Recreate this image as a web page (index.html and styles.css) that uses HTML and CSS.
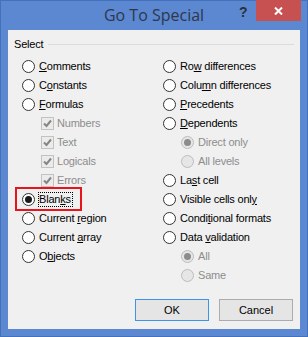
FILE: index.html
```html
<!DOCTYPE html>
<html>
<head>
<meta charset="utf-8">
<link rel="stylesheet" href="styles.css">
</head>
<body>
<div class="window">
  <div class="titlebar">
    <span class="title">Go To Special</span>
    <span class="help">?</span>
    <span class="close"><svg width="9" height="8" viewBox="0 0 9 8"><path d="M1 0.5 L8 7.5 M8 0.5 L1 7.5" stroke="#fff" stroke-width="2" fill="none"/></svg></span>
  </div>
  <div class="client">
    <div class="group-head"><span>Select</span><span class="rule"></span></div>
    <div class="cols">
      <div class="col">
        <div class="opt"><span class="radio"></span><span class="lbl"><u>C</u>omments</span></div>
        <div class="opt"><span class="radio"></span><span class="lbl">C<u>o</u>nstants</span></div>
        <div class="opt"><span class="radio"></span><span class="lbl"><u>F</u>ormulas</span></div>
        <div class="opt sub-l dis"><span class="check"><svg width="11" height="11" viewBox="0 0 11 11"><path d="M2 5.5 L4.5 8 L9 2.5" stroke="#858585" stroke-width="2" fill="none"/></svg></span><span class="lbl">Numbers</span></div>
        <div class="opt sub-l dis"><span class="check"><svg width="11" height="11" viewBox="0 0 11 11"><path d="M2 5.5 L4.5 8 L9 2.5" stroke="#858585" stroke-width="2" fill="none"/></svg></span><span class="lbl">Text</span></div>
        <div class="opt sub-l dis"><span class="check"><svg width="11" height="11" viewBox="0 0 11 11"><path d="M2 5.5 L4.5 8 L9 2.5" stroke="#858585" stroke-width="2" fill="none"/></svg></span><span class="lbl">Logicals</span></div>
        <div class="opt sub-l dis"><span class="check"><svg width="11" height="11" viewBox="0 0 11 11"><path d="M2 5.5 L4.5 8 L9 2.5" stroke="#858585" stroke-width="2" fill="none"/></svg></span><span class="lbl">Errors</span></div>
        <div class="opt marked"><span class="radio on"></span><span class="lbl focus">Blan<u>k</u>s</span></div>
        <div class="opt"><span class="radio"></span><span class="lbl">Current <u>r</u>egion</span></div>
        <div class="opt"><span class="radio"></span><span class="lbl">Current <u>a</u>rray</span></div>
        <div class="opt"><span class="radio"></span><span class="lbl">O<u>b</u>jects</span></div>
      </div>
      <div class="col">
        <div class="opt"><span class="radio"></span><span class="lbl">Ro<u>w</u> differences</span></div>
        <div class="opt"><span class="radio"></span><span class="lbl">Colu<u>m</u>n differences</span></div>
        <div class="opt"><span class="radio"></span><span class="lbl"><u>P</u>recedents</span></div>
        <div class="opt"><span class="radio"></span><span class="lbl"><u>D</u>ependents</span></div>
        <div class="opt sub-r dis"><span class="radio on"></span><span class="lbl">Direct only</span></div>
        <div class="opt sub-r dis"><span class="radio"></span><span class="lbl">All levels</span></div>
        <div class="opt"><span class="radio"></span><span class="lbl">La<u>s</u>t cell</span></div>
        <div class="opt"><span class="radio"></span><span class="lbl">Visible cells onl<u>y</u></span></div>
        <div class="opt"><span class="radio"></span><span class="lbl">Condi<u>t</u>ional formats</span></div>
        <div class="opt"><span class="radio"></span><span class="lbl">Data <u>v</u>alidation</span></div>
        <div class="opt sub-r dis"><span class="radio on"></span><span class="lbl">All</span></div>
        <div class="opt sub-r dis"><span class="radio"></span><span class="lbl">Same</span></div>
      </div>
    </div>
    <div class="buttons">
      <button class="btn default">OK</button>
      <button class="btn">Cancel</button>
    </div>
  </div>
</div>
</body>
</html>
```

FILE: styles.css
```css
html, body {
  margin: 0;
  padding: 0;
  background: #ffffff;
}

.window {
  width: 308px;
  height: 337px;
  box-sizing: border-box;
  border: 1px solid #4471bb;
  background: #5b88d1;
  position: relative;
  font-family: "Liberation Sans", Arial, sans-serif;
  font-size: 11px;
  color: #000;
}

.titlebar {
  height: 29px;
  position: relative;
}

.title {
  display: block;
  text-align: center;
  font-family: "Open Sans", "Noto Sans", sans-serif;
  font-size: 16px;
  line-height: 29px;
  color: #2e374b;
}

.help {
  position: absolute;
  left: 238px;
  top: 3px;
  font-family: "Liberation Sans", Arial, sans-serif;
  font-weight: bold;
  font-size: 14px;
  line-height: 16px;
  color: #2a2f3a;
}

.close {
  position: absolute;
  top: -1px;
  right: 6px;
  width: 45px;
  height: 21px;
  background: #c75050;
  display: flex;
  align-items: center;
  justify-content: center;
}

.client {
  margin-left: 7px;
  width: 292px;
  height: 299px;
  box-sizing: border-box;
  background: #f0f0f0;
  padding: 8px 6px 8px 6px;
  display: flex;
  flex-direction: column;
}

.group-head {
  display: flex;
  align-items: center;
  line-height: 13px;
  height: 13px;
  letter-spacing: -0.2px;
}

.rule {
  flex: 1;
  height: 1px;
  margin-left: 5px;
  background: #dcdcdc;
}

.cols {
  margin-top: 6px;
  padding-left: 8px;
  display: grid;
  grid-template-columns: 141px 1fr;
}

.opt {
  height: 19px;
  display: flex;
  align-items: center;
  gap: 4px;
  line-height: 13px;
  white-space: nowrap;
  position: relative;
  letter-spacing: -0.2px;
}

.sub-l {
  margin-left: 19px;
  gap: 3px;
}

.sub-r {
  margin-left: 18px;
}

.radio {
  width: 13px;
  height: 13px;
  box-sizing: border-box;
  border: 1px solid #333;
  border-radius: 50%;
  background: #fff;
  flex: none;
  display: flex;
  align-items: center;
  justify-content: center;
}

.radio.on::after {
  content: "";
  width: 7px;
  height: 7px;
  border-radius: 50%;
  background: #1a1a1a;
}

.check {
  width: 13px;
  height: 13px;
  box-sizing: border-box;
  border: 1px solid #c2c2c2;
  background: #ebebeb;
  flex: none;
  display: flex;
  align-items: center;
  justify-content: center;
}

.dis .lbl {
  color: #8d8d8d;
}

.dis .radio {
  border-color: #bcbcbc;
  background: #e6e6e6;
}

.dis .radio.on::after {
  background: #8c8c8c;
}

.lbl u {
  text-decoration: underline;
  text-underline-offset: 1px;
}

.focus {
  outline: 1px dotted #000;
  outline-offset: 0;
  padding-right: 1px;
}

.marked::after {
  content: "";
  position: absolute;
  left: -7px;
  top: -3px;
  width: 67px;
  height: 24px;
  box-sizing: border-box;
  border: 2px solid #e8131b;
}

.buttons {
  margin-top: auto;
  display: flex;
  justify-content: flex-end;
  gap: 10px;
  padding-right: 1px;
}

.btn {
  width: 74px;
  height: 22px;
  box-sizing: border-box;
  border: 1px solid #acacac;
  background: #e5e5e5;
  font-family: "Liberation Sans", Arial, sans-serif;
  font-size: 11px;
  color: #000;
  padding: 0;
  margin: 0;
}

.btn.default {
  border-color: #3c95ea;
}
```
